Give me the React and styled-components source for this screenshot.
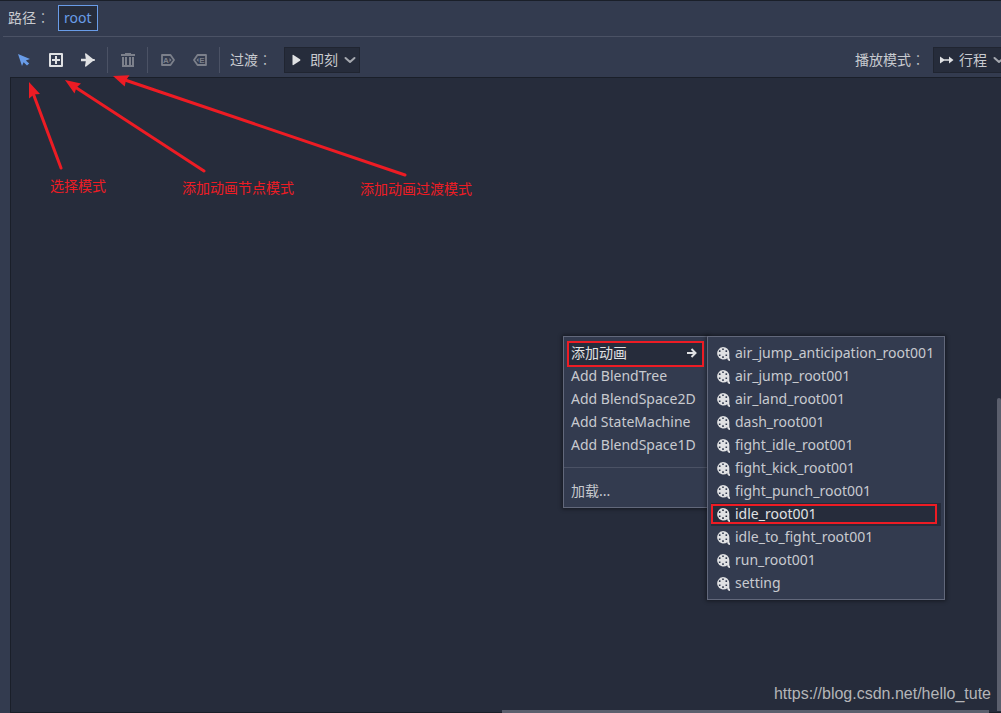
import React from "react";
import styled, { createGlobalStyle, css } from "styled-components";

const color = {
  base: "#333b4f",
  dark: "#262c3b",
  edge: "#1a1f29",
  line: "#4b5265",
  popupEdge: "#62687b",
  text: "#c8cacf",
  bright: "#e0e1e3",
  accent: "#699ce8",
  dim: "#7c808b",
  chevron: "#a5a8af",
  mark: "#ed1c24",
};

const GlobalStyle = createGlobalStyle`
  * { box-sizing: border-box; }
  html, body, #root { height: 100%; }
  body {
    margin: 0;
    overflow: hidden;
    background: ${color.base};
    color: ${color.text};
    font: 14px/20px "Noto Sans", "Noto Sans CJK SC", sans-serif;
  }
  button, select { font: inherit; color: inherit; }
`;

const Editor = styled.div`
  position: relative;
  display: flex;
  flex-direction: column;
  height: 100%;
  overflow: hidden;
  border-top: 1px solid ${color.edge};
`;

const PathBar = styled.nav`
  display: flex;
  align-items: center;
  gap: 8px;
  height: 36px;
  margin-left: 3px;
  padding: 0 5px 2px;
  border-bottom: 1px solid ${color.line};
`;

const PathButton = styled.button`
  height: 26px;
  padding: 0 5px;
  border: 1px solid ${color.accent};
  background: ${color.dark};
  color: ${color.accent};
`;

const Toolbar = styled.div`
  display: flex;
  align-items: center;
  gap: 4px;
  height: 40px;
  padding: 6px 0 0 10px;
`;

const ToolButton = styled.button`
  display: grid;
  place-items: center;
  width: 28px;
  height: 26px;
  padding: 0;
  border: 0;
  background: none;
  color: ${(p) => (p.$active ? color.accent : p.disabled ? color.dim : color.bright)};
`;

const Divider = styled.span`
  width: 4px;
  height: 26px;
  padding-left: 1px;
  &::before {
    content: "";
    display: block;
    width: 1px;
    height: 100%;
    background: ${color.line};
  }
`;

const FieldLabel = styled.label`
  padding: 0 8px 2px 4px;
  white-space: nowrap;
`;

const ColonGlyph = styled.span`
  font-family: "Noto Sans CJK TC", sans-serif;
  font-weight: 300;
`;

const PlaybackGroup = styled.div`
  display: flex;
  align-items: center;
  margin-left: auto;
  margin-right: -8px;
`;

const SelectBox = styled.div`
  position: relative;
  width: 76px;
  height: 26px;
  svg {
    position: absolute;
    top: 5px;
    pointer-events: none;
  }
  svg:first-child { left: 5px; color: ${color.bright}; }
  svg:last-child { right: 2px; }
`;

const Select = styled.select`
  appearance: none;
  width: 100%;
  height: 100%;
  padding: 0 0 0 25px;
  border: 1px solid #202531;
  border-radius: 0;
  background: ${color.dark};
`;

const GraphCanvas = styled.main`
  position: relative;
  flex: 1;
  margin-left: 10px;
  border: solid ${color.edge};
  border-width: 1px 0 1px 1px;
  background: ${color.dark};
`;

const ScrollThumb = styled.div`
  position: absolute;
  background: #5b5f6d;
  ${(p) =>
    p.$vertical
      ? css`top: 45%; right: 0; bottom: 1px; width: 4px; margin-top: 35px; border-radius: 2px 2px 0 0;`
      : css`left: 50%; right: 12px; bottom: -1px; height: 3px; margin-left: -4px;`}
`;

const Watermark = styled.a`
  position: absolute;
  right: 10px;
  bottom: 8px;
  color: #b4b5b8;
  font: 16px/20px "Liberation Sans", sans-serif;
  text-decoration: none;
`;

const Popup = styled.ul`
  position: absolute;
  top: ${(p) => p.$top}px;
  left: ${(p) => p.$left}px;
  width: ${(p) => p.$width}px;
  margin: 0;
  padding: 5px 3px 4px;
  list-style: none;
  border: 1px solid ${color.popupEdge};
  background: ${color.base};
  box-shadow: 0 0 4px 1px rgba(0, 0, 0, 0.45);
`;

const MenuItem = styled.button`
  display: flex;
  align-items: center;
  gap: 4px;
  width: 100%;
  height: 23px;
  padding: 0 4px 2px;
  border: 0;
  text-align: left;
  white-space: nowrap;
  background: ${(p) => (p.$hover ? color.dark : "none")};
  color: ${(p) => (p.$hover ? color.bright : color.text)};
  svg { flex: none; color: ${color.bright}; }
  svg:last-child { margin-left: auto; }
`;

const MenuSeparator = styled.li`
  height: 23px;
  margin: 0 -3px;
  padding-top: 10px;
  &::before {
    content: "";
    display: block;
    height: 1px;
    background: ${color.line};
  }
`;

const MarkLayer = styled.svg`
  position: absolute;
  top: -1px;
  left: 0;
  pointer-events: none;
`;

const Note = styled.span`
  position: absolute;
  top: ${(p) => p.$top}px;
  left: ${(p) => p.$left}px;
  color: ${color.mark};
  font-family: "Noto Sans CJK SC", sans-serif;
`;

const Icon = ({ children }) => (
  <svg width="16" height="16" viewBox="0 0 16 16" fill="currentColor" aria-hidden="true">
    {children}
  </svg>
);

const CursorIcon = () => (
  <Icon><path d="M2 2 6 14 7.6 10.2 11 13.6 13.2 11.4 9.8 8.4 14 7Z" /></Icon>
);
const AddNodeIcon = () => (
  <Icon>
    <path fillRule="evenodd" d="M2 1h12a1 1 0 0 1 1 1v12a1 1 0 0 1-1 1H2a1 1 0 0 1-1-1V2a1 1 0 0 1 1-1Zm1 2v10h10V3Z" />
    <path d="M7 4h2v3h3v2H9v3H7V9H4V7h3Z" />
  </Icon>
);
const ConnectIcon = () => (
  <Icon><path d="M5 2Q5.200 .8 6.200 1.500L13 7H14.500Q15.500 8 14.500 9H13L6.200 14.500Q5.200 15.200 5 14L5.800 9.200H1V6.800H5.800Z" /></Icon>
);
const TrashIcon = () => (
  <Icon>
    <path d="M5 1h6v1h4v2H1V2h4Z" />
    <path fillRule="evenodd" d="M2 5h12v10H2Zm2 0v8h1V5Zm3 0v8h2V5Zm4 0v8h1V5Z" />
  </Icon>
);
const TagIcon = ({ letter, flip }) => (
  <Icon>
    <path
      transform={flip ? "matrix(-1 0 0 1 16 0)" : undefined}
      d="M2 3H10.500L14 8 10.500 13H2Z"
      fill="none"
      stroke="currentColor"
      strokeWidth="1.800"
      strokeLinejoin="round"
    />
    <text x={flip ? 10 : 6} y="11" textAnchor="middle" fontSize="8" fontWeight="700" fontFamily="Liberation Sans, sans-serif">
      {letter}
    </text>
    <path d={flip ? "M6.500 6v4L4.500 8Z" : "M9.500 6v4L11.500 8Z"} />
  </Icon>
);
const PlayIcon = () => (
  <Icon><path d="M3.500 3.500Q3.500 2.500 4.500 3L11 7.200Q12 8 11 8.800L4.500 13Q3.500 13.500 3.500 12.500Z" /></Icon>
);
const TravelIcon = () => (
  <Icon><path d="M2 4.500 6 7.300H11V4.500L15.500 8 11 11.500V8.700H6L2 11.500Z" /></Icon>
);
const ChevronIcon = () => (
  <Icon><path d="M3.500 6 8 10 12.500 6" fill="none" stroke={color.chevron} strokeWidth="2" strokeLinecap="round" strokeLinejoin="round" /></Icon>
);
const SubmenuIcon = () => (
  <Icon><path d="M3 8H11M7.500 4 11.500 8 7.500 12" fill="none" stroke="currentColor" strokeWidth="2" /></Icon>
);
const FilmIcon = () => (
  <Icon>
    <path
      fillRule="evenodd"
      d="M8 2a6.300 6.300 0 0 1 6.300 6.300V13Q14.300 14 15 14.200V16Q12.500 16 12.300 13.300A6.300 6.300 0 1 1 8 2ZM7.200 3.500v1.600h1.600V3.500ZM3.900 5.300v1.600h1.600V5.300Zm6.600 0v1.600h1.600V5.300Zm-6.600 4.200v1.600h1.600V9.500Zm6.600 0v1.600h1.600V9.500ZM7.200 11.300v1.600h1.600v-1.600Z"
    />
  </Icon>
);

const nodeTypes = ["Add BlendTree", "Add BlendSpace2D", "Add StateMachine", "Add BlendSpace1D"];
const animations = [
  "air_jump_anticipation_root001",
  "air_jump_root001",
  "air_land_root001",
  "dash_root001",
  "fight_idle_root001",
  "fight_kick_root001",
  "fight_punch_root001",
  "idle_root001",
  "idle_to_fight_root001",
  "run_root001",
  "setting",
];

export default function App() {
  return (
    <>
      <GlobalStyle />
      <Editor>
        <PathBar aria-label="路径">
          <span>路径<ColonGlyph>：</ColonGlyph></span>
          <PathButton>root</PathButton>
        </PathBar>

        <Toolbar role="toolbar">
          <ToolButton $active aria-label="选择模式"><CursorIcon /></ToolButton>
          <ToolButton aria-label="添加动画节点模式"><AddNodeIcon /></ToolButton>
          <ToolButton aria-label="添加动画过渡模式"><ConnectIcon /></ToolButton>
          <Divider />
          <ToolButton disabled aria-label="删除"><TrashIcon /></ToolButton>
          <Divider />
          <ToolButton disabled aria-label="自动播放"><TagIcon letter="A" /></ToolButton>
          <ToolButton disabled aria-label="结束"><TagIcon letter="E" flip /></ToolButton>
          <Divider />
          <FieldLabel htmlFor="transition">过渡<ColonGlyph>：</ColonGlyph></FieldLabel>
          <SelectBox>
            <PlayIcon />
            <Select id="transition"><option>即刻</option></Select>
            <ChevronIcon />
          </SelectBox>
          <PlaybackGroup>
            <FieldLabel htmlFor="playback">播放模式<ColonGlyph>：</ColonGlyph></FieldLabel>
            <SelectBox>
              <TravelIcon />
              <Select id="playback"><option>行程</option></Select>
              <ChevronIcon />
            </SelectBox>
          </PlaybackGroup>
        </Toolbar>

        <GraphCanvas>
          <Watermark href="https://blog.csdn.net/hello_tute">https://blog.csdn.net/hello_tute</Watermark>
          <ScrollThumb $vertical />
          <ScrollThumb />
        </GraphCanvas>

        <Popup $top={335} $left={563} $width={145}>
          <li><MenuItem $hover>添加动画<SubmenuIcon /></MenuItem></li>
          {nodeTypes.map((name) => (
            <li key={name}><MenuItem>{name}</MenuItem></li>
          ))}
          <MenuSeparator />
          <li><MenuItem>加载...</MenuItem></li>
        </Popup>

        <Popup $top={335} $left={707} $width={238}>
          {animations.map((name) => (
            <li key={name}>
              <MenuItem $hover={name === "idle_root001"}><FilmIcon /><span>{name}</span></MenuItem>
            </li>
          ))}
        </Popup>

        <MarkLayer width="1001" height="713" viewBox="0 0 1001 713" aria-hidden="true">
          <g stroke={color.mark} strokeWidth="3" strokeLinecap="round">
            <path d="M61 168 33 93M204 171 75 87M405 175 125 80" />
          </g>
          <g fill={color.mark}>
            <path d="M29 82 40 94 34 94.500 29 98.500Z" />
            <path d="M65 80 81 83.500 76.500 87.500 74.500 93.500Z" />
            <path d="M113 76 129.500 75.300 126 80.300 124.700 86.500Z" />
          </g>
          <g fill="none" stroke={color.mark} strokeWidth="2">
            <rect x="568" y="342" width="135" height="24" />
            <rect x="712" y="505" width="224" height="18" />
          </g>
        </MarkLayer>
        <Note $top={174} $left={50}>选择模式</Note>
        <Note $top={176} $left={182}>添加动画节点模式</Note>
        <Note $top={177} $left={360}>添加动画过渡模式</Note>
      </Editor>
    </>
  );
}
